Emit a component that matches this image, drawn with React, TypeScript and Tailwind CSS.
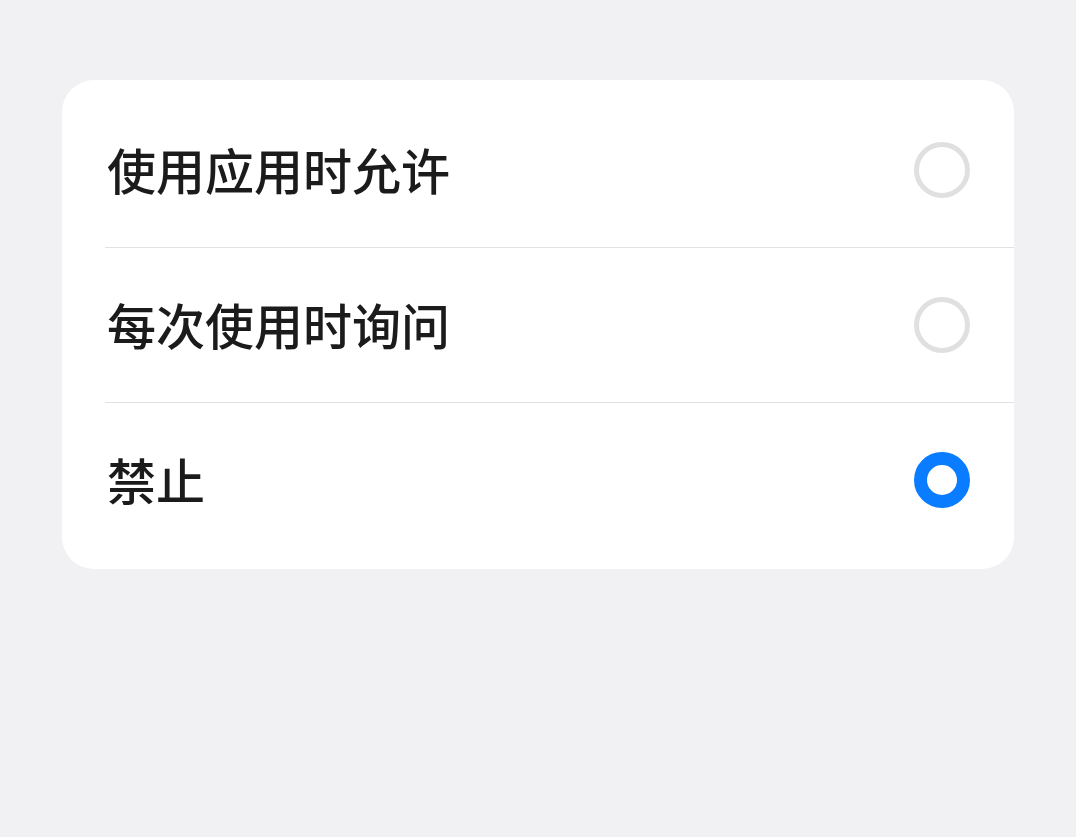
import { useState } from 'react';

const options = ['使用应用时允许', '每次使用时询问', '禁止'];

export default function App() {
  const [selected, setSelected] = useState(2);

  return (
    <div
      className="min-h-[837px] w-full bg-[#f1f1f3] pt-[80px] px-[62px]"
      style={{ fontFamily: '"Noto Sans CJK SC", "Noto Sans", sans-serif' }}
    >
      <div className="w-[952px] rounded-[32px] bg-white py-[12px]">
        {options.map((label, i) => (
          <div key={label}>
            {i > 0 && <div className="ml-[43px] h-px bg-[#e2e2e4]" />}
            <button
              type="button"
              onClick={() => setSelected(i)}
              className={`flex w-full items-center justify-between pl-[45px] pr-[44px] text-left ${
                i === 0 ? 'h-[155px]' : 'h-[154px]'
              }`}
            >
              <span className="-mt-[3px] text-[49px] font-medium leading-none text-[#1b1b1b]">
                {label}
              </span>
              <Radio checked={i === selected} />
            </button>
          </div>
        ))}
      </div>
    </div>
  );
}

function Radio({ checked }: { checked: boolean }) {
  if (checked) {
    return (
      <span className="block h-[56px] w-[56px] rounded-full border-[13px] border-[#0a7cff] bg-white" />
    );
  }
  return (
    <span className="block h-[56px] w-[56px] rounded-full border-[5px] border-[#e0e0e0] bg-white" />
  );
}
